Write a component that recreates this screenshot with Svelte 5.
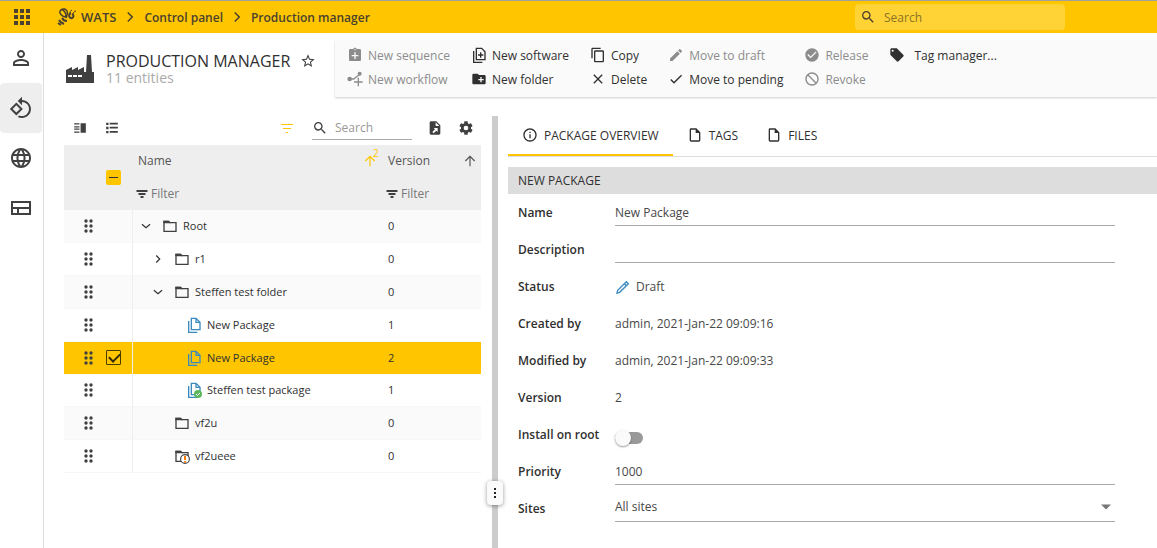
<script lang="ts">
  const FILLED: Record<string, string> = {
    apps: "M4 4h4v4H4zM10 4h4v4h-4zM16 4h4v4h-4zM4 10h4v4H4zM10 10h4v4h-4zM16 10h4v4h-4zM4 16h4v4H4zM10 16h4v4h-4zM16 16h4v4h-4z",
    search:
      "M15.5 14h-.79l-.28-.27A6.47 6.47 0 0 0 16 9.5 6.5 6.5 0 1 0 9.5 16c1.61 0 3.09-.59 4.23-1.57l.27.28v.79l5 4.99L20.49 19l-4.99-5zm-6 0C7.01 14 5 11.99 5 9.5S7.01 5 9.5 5 14 7.01 14 9.5 11.99 14 9.5 14z",
    person:
      "M12 5.9a2.1 2.1 0 1 1 0 4.2 2.1 2.1 0 0 1 0-4.2m0 9c2.97 0 6.1 1.46 6.1 2.1v1.1H5.9V17c0-.64 3.13-2.1 6.1-2.1M12 4C9.79 4 8 5.79 8 8s1.79 4 4 4 4-1.79 4-4-1.79-4-4-4zm0 9c-2.67 0-8 1.34-8 4v3h16v-3c0-2.66-5.33-4-8-4z",
    rotate:
      "M7.34 6.41L.86 12.9l6.49 6.48 6.49-6.48-6.5-6.49zM3.69 12.9l3.66-3.66L11 12.9l-3.66 3.66-3.65-3.66zm15.67-6.26C17.61 4.88 15.3 4 13 4V.76L8.76 5 13 9.24V6c1.79 0 3.58.68 4.95 2.05 2.73 2.73 2.73 7.17 0 9.9C16.58 19.32 14.79 20 13 20c-.97 0-1.94-.21-2.84-.61l-1.49 1.49C10.02 21.62 11.51 22 13 22c2.3 0 4.61-.88 6.36-2.64 3.52-3.51 3.52-9.21 0-12.72z",
    globe:
      "M11.99 2C6.47 2 2 6.48 2 12s4.47 10 9.99 10C17.52 22 22 17.52 22 12S17.52 2 11.99 2zm6.93 6h-2.95c-.32-1.25-.78-2.45-1.38-3.56 1.84.63 3.37 1.91 4.33 3.56zM12 4.04c.83 1.2 1.48 2.53 1.91 3.96h-3.82c.43-1.43 1.08-2.76 1.91-3.96zM4.26 14C4.1 13.36 4 12.69 4 12s.1-1.36.26-2h3.38c-.08.66-.14 1.32-.14 2 0 .68.06 1.34.14 2H4.26zm.82 2h2.95c.32 1.25.78 2.45 1.38 3.56-1.84-.63-3.37-1.9-4.33-3.56zm2.95-8H5.08c.96-1.66 2.49-2.93 4.33-3.56C8.81 5.55 8.35 6.75 8.03 8zM12 19.96c-.83-1.2-1.48-2.53-1.91-3.96h3.82c-.43 1.43-1.08 2.76-1.91 3.96zM14.34 14H9.66c-.09-.66-.16-1.32-.16-2 0-.68.07-1.35.16-2h4.68c.09.65.16 1.32.16 2 0 .68-.07 1.34-.16 2zm.25 5.56c.6-1.11 1.06-2.31 1.38-3.56h2.95c-.96 1.65-2.49 2.93-4.33 3.56zM16.36 14c.08-.66.14-1.32.14-2 0-.68-.06-1.34-.14-2h3.38c.16.64.26 1.31.26 2s-.1 1.36-.26 2h-3.38z",
    star: "M22 9.24l-7.19-.62L12 2 9.19 8.63 2 9.24l5.46 4.73L5.82 21 12 17.27 18.18 21l-1.63-7.03L22 9.24zM12 15.4l-3.76 2.27 1-4.28-3.32-2.88 4.38-.38L12 6.1l1.71 4.04 4.38.38-3.32 2.88 1 4.28L12 15.4z",
    sequence:
      "M19 3h-4.18C14.4 1.84 13.3 1 12 1s-2.4.84-2.82 2H5a2 2 0 0 0-2 2v14c0 1.1.9 2 2 2h14a2 2 0 0 0 2-2V5a2 2 0 0 0-2-2zm-6 9h4v2h-4v4h-2v-4H7v-2h4V8h2zM12 3a1 1 0 1 1 0 2 1 1 0 0 1 0-2z",
    folderPlus:
      "M20 6h-8l-2-2H4a2 2 0 0 0-2 2v12c0 1.1.9 2 2 2h16a2 2 0 0 0 2-2V8a2 2 0 0 0-2-2zm-1 8h-3v3h-2v-3h-3v-2h3V9h2v3h3v2z",
    copy: "M16 1H4c-1.1 0-2 .9-2 2v14h2V3h12V1zm3 4H8c-1.1 0-2 .9-2 2v14c0 1.1.9 2 2 2h11c1.1 0 2-.9 2-2V7c0-1.1-.9-2-2-2zm0 16H8V7h11v14z",
    close:
      "M19 6.41L17.59 5 12 10.59 6.41 5 5 6.41 10.59 12 5 17.59 6.41 19 12 13.41 17.59 19 19 17.59 13.41 12z",
    pencil:
      "M3 17.25V21h3.75L17.81 9.94l-3.75-3.75L3 17.25zM20.71 7.04a1 1 0 0 0 0-1.41l-2.34-2.34a1 1 0 0 0-1.41 0l-1.83 1.83 3.75 3.75 1.83-1.83z",
    check: "M9 16.17L4.83 12l-1.42 1.41L9 19 21 7l-1.41-1.41z",
    release:
      "M12 2C6.48 2 2 6.48 2 12s4.48 10 10 10 10-4.48 10-10S17.52 2 12 2zm-2 15l-5-5 1.41-1.41L10 14.17l7.59-7.59L19 8l-9 9z",
    revoke:
      "M12 2C6.48 2 2 6.48 2 12s4.48 10 10 10 10-4.48 10-10S17.52 2 12 2zm0 18a8 8 0 0 1-8-8c0-1.85.63-3.55 1.69-4.9L16.9 18.31A7.9 7.9 0 0 1 12 20zm6.31-3.1L7.1 5.69A7.9 7.9 0 0 1 12 4a8 8 0 0 1 8 8c0 1.85-.63 3.55-1.69 4.9z",
    tag: "M21.41 11.58l-9-9C12.05 2.22 11.55 2 11 2H4c-1.1 0-2 .9-2 2v7c0 .55.22 1.05.59 1.42l9 9c.36.36.86.58 1.41.58s1.05-.22 1.41-.59l7-7c.37-.36.59-.86.59-1.41s-.23-1.06-.59-1.42zM5.5 7a1.5 1.5 0 1 1 0-3 1.5 1.5 0 0 1 0 3z",
    gear: "M19.43 12.98c.04-.32.07-.64.07-.98s-.03-.66-.07-.98l2.11-1.65c.19-.15.24-.42.12-.64l-2-3.46c-.12-.22-.39-.3-.61-.22l-2.49 1c-.52-.4-1.08-.73-1.69-.98l-.38-2.65C14.46 2.18 14.25 2 14 2h-4c-.25 0-.46.18-.49.42l-.38 2.65c-.61.25-1.17.59-1.69.98l-2.49-1c-.23-.09-.49 0-.61.22l-2 3.46c-.13.22-.07.49.12.64l2.11 1.65c-.04.32-.07.65-.07.98s.03.66.07.98l-2.11 1.65c-.19.15-.24.42-.12.64l2 3.46c.12.22.39.3.61.22l2.49-1c.52.4 1.08.73 1.69.98l.38 2.65c.03.24.24.42.49.42h4c.25 0 .46-.18.49-.42l.38-2.65c.61-.25 1.17-.59 1.69-.98l2.49 1c.23.09.49 0 .61-.22l2-3.46c.12-.22.07-.49-.12-.64l-2.11-1.65zM12 15.5a3.5 3.5 0 1 1 0-7 3.5 3.5 0 0 1 0 7z",
    info: "M11 17h2v-6h-2v6zm0-8h2V7h-2v2zm1-7C6.48 2 2 6.48 2 12s4.48 10 10 10 10-4.48 10-10S17.52 2 12 2zm0 18c-4.41 0-8-3.59-8-8s3.59-8 8-8 8 3.59 8 8-3.59 8-8 8z",
    columns: "M2 4h9v2H2zM2 9h9v2H2zM2 13h9v2H2zM2 18h9v2H2zM13 4h9v16h-9z",
    list: "M2 3h4v4H2zM2 10h4v4H2zM2 17h4v4H2zM8 3h14v3H8zM8 10h14v3H8zM8 17h14v3H8z",
    filter: "M1 4h22v4H1zM5 10h14v4H5zM9 16h6v4H9z",
    exportFile:
      "M14 2H6a2 2 0 0 0-2 2v16c0 1.1.9 2 2 2h12a2 2 0 0 0 2-2V8zM13 3.5V9h5.5zM16 18l-2-2-4 4-2-2 4-4-2-2h6z",
    page: "M14 2H6a2 2 0 0 0-2 2v16c0 1.1.9 2 2 2h12a2 2 0 0 0 2-2V8zM6 4h7v5h5v11H6z",
    caret: "M2 7h20l-10 10z",
  };

  const STROKED: Record<string, string> = {
    layout: "M3 6h18v12H3zM3 12h18M9 12v6",
    right: "M9 6l6 6-6 6",
    down: "M5 9l7 6 7-6",
    up: "M12 21V4M4 12l8-8 8 8",
    software: "M8 2h8l5 5v12H8zM4 6v17h13M14.5 8v8M10.5 12h8",
    folder: "M3 5h7l2 2h9v13H3z",
    package: "M8 2h7l6 6v11H8zM15 2v6h6M4 6v17h13",
    edit: "M3 21l1-4L17 4l3 3L7 20zM14 7l3 3",
  };

  const sideLinks = [
    { icon: "person", label: "Account" },
    { icon: "rotate", label: "Production", active: true },
    { icon: "globe", label: "Sites" },
    { icon: "layout", label: "Dashboard" },
  ];

  const actions = [
    [
      { icon: "sequence", label: "New sequence", off: true },
      { icon: "workflow", label: "New workflow", off: true },
    ],
    [
      { icon: "software", label: "New software" },
      { icon: "folderPlus", label: "New folder" },
    ],
    [
      { icon: "copy", label: "Copy" },
      { icon: "close", label: "Delete" },
    ],
    [
      { icon: "pencil", label: "Move to draft", off: true },
      { icon: "check", label: "Move to pending" },
    ],
    [
      { icon: "release", label: "Release", off: true },
      { icon: "revoke", label: "Revoke", off: true },
    ],
    [{ icon: "tag", label: "Tag manager..." }],
  ];

  const rows = [
    { name: "Root", version: 0, level: 0, icon: "folder", toggle: "down" },
    { name: "r1", version: 0, level: 1, icon: "folder", toggle: "right" },
    { name: "Steffen test folder", version: 0, level: 1, icon: "folder", toggle: "down" },
    { name: "New Package", version: 1, level: 2, icon: "package" },
    { name: "New Package", version: 2, level: 2, icon: "package" },
    { name: "Steffen test package", version: 1, level: 2, icon: "package", badge: "ok" },
    { name: "vf2u", version: 0, level: 1, icon: "folder" },
    { name: "vf2ueee", version: 0, level: 1, icon: "folder", badge: "warn" },
  ];

  const tabs = [
    { icon: "info", label: "PACKAGE OVERVIEW" },
    { icon: "page", label: "TAGS" },
    { icon: "page", label: "FILES" },
  ];

  let selected = $state(4);
  let activeTab = $state(0);
  let name = $state("New Package");
  let description = $state("");
  let installOnRoot = $state(false);
  let priority = $state("1000");
</script>

{#snippet icon(id: string, size = 16)}
  <svg width={size} height={size} viewBox="0 0 24 24" aria-hidden="true">
    {#if id === "workflow"}
      <path d="M4 12l6 0 8-6M17 10v13M10.5 16.5h13" fill="none" stroke="currentColor" stroke-width="2" />
      <circle cx="4" cy="12" r="3.5" fill="currentColor" />
      <circle cx="19" cy="4" r="3" fill="currentColor" />
    {:else if FILLED[id]}
      <path d={FILLED[id]} fill="currentColor" fill-rule="evenodd" />
    {:else}
      <path d={STROKED[id]} fill="none" stroke="currentColor" stroke-width="2" />
      {#if id === "folder"}
        <path d="M2 4h8l3 4H2z" fill="currentColor" />
      {/if}
    {/if}
  </svg>
{/snippet}

<div class="app">
  <header class="topbar">
    <button class="apps" aria-label="Apps">{@render icon("apps", 24)}</button>
    <nav class="crumbs" aria-label="Breadcrumb">
      <a class="brand" href="#home">
        <svg width="20" height="18" viewBox="0 0 20 18" fill="none" stroke="currentColor" aria-hidden="true">
          <path d="M9 9C5 9 2 5 3 3c2-3 6 0 6 6z" stroke-width="1.5" />
          <path d="M4 2c2-2 5-1 6 1 1 3 0 5-1 7" stroke-width="1.5" />
          <path d="M5 10c1 2 2 3 5 3M2 12c1 2 3 3 5 4M1 15l3 2" stroke-width="2" />
          <path d="M14 5c-3 1-2 6 1 5 2-1 2-3 0-4" stroke-width="2" />
          <path d="M13 6c0-2 0-3 2-4M16 6c1-2 1-3 3-3" stroke-width="1" />
        </svg>
        WATS
      </a>
      {@render icon("right", 18)}
      <a href="#control">Control panel</a>
      {@render icon("right", 18)}
      <a href="#production">Production manager</a>
    </nav>
    <label class="top-search">
      {@render icon("search", 16)}
      <input type="search" placeholder="Search" aria-label="Search" />
    </label>
  </header>

  <div class="body">
    <nav class="sidebar" aria-label="Main">
      {#each sideLinks as link}
        <a href="#{link.label}" class:active={link.active} aria-label={link.label}>
          {@render icon(link.icon, 24)}
        </a>
      {/each}
    </nav>

    <main>
      <div class="page-head">
        <div class="title">
          <svg width="28" height="28" viewBox="0 0 28 28" aria-hidden="true">
            <path
              d="M0 28V15l6-3v3l6-3v3l6-3v5h2L21 0h4l1 17h2v11zM2 20v2h4v-2zM7 20v2h4v-2zM12 20v2h4v-2z"
              fill="currentColor"
              fill-rule="evenodd"
            />
          </svg>
          <div class="title-text">
            <h1>PRODUCTION MANAGER</h1>
            <p>11 entities</p>
          </div>
          <button class="star" aria-label="Favourite">{@render icon("star", 16)}</button>
        </div>
        <div class="actions">
          {#each actions as group}
            <div class="group">
              {#each group as action}
                <button disabled={action.off}>
                  {@render icon(action.icon, 16)}
                  {action.label}
                </button>
              {/each}
            </div>
          {/each}
        </div>
      </div>

      <div class="panes">
        <section class="list-pane">
          <div class="list-tools">
            <div class="view-tools">
              <button aria-label="Columns">{@render icon("columns", 14)}</button>
              <button aria-label="List view">{@render icon("list", 14)}</button>
            </div>
            <button class="filter-on" aria-label="Toggle filter">
              <svg width="12" height="9" viewBox="0 0 12 9" aria-hidden="true">
                <path d="M0 0h12v1H0zM2 4h8v1H2zM5 8h2v1H5z" fill="currentColor" />
              </svg>
            </button>
            <label class="list-search">
              {@render icon("search", 16)}
              <input type="search" placeholder="Search" aria-label="Search list" />
            </label>
            <button aria-label="Export">{@render icon("exportFile", 16)}</button>
            <button aria-label="Settings">{@render icon("gear", 16)}</button>
          </div>

          <table>
            <colgroup>
              <col class="col-drag" />
              <col class="col-check" />
              <col />
              <col class="col-version" />
            </colgroup>
            <thead>
              <tr>
                <th rowspan="2"></th>
                <th rowspan="2">
                  <button class="select-some" aria-label="Clear selection"></button>
                </th>
                <th>
                  <div class="th">
                    Name
                    <span class="sort sorted">{@render icon("up", 14)}<sup>2</sup></span>
                  </div>
                </th>
                <th>
                  <div class="th">
                    Version
                    <span class="sort">{@render icon("up", 14)}</span>
                  </div>
                </th>
              </tr>
              <tr>
                {#each ["name", "version"] as column}
                  <th>
                    <label class="filter">
                      {@render icon("filter", 12)}
                      <input placeholder="Filter" aria-label="Filter by {column}" />
                    </label>
                  </th>
                {/each}
              </tr>
            </thead>
            <tbody>
              {#each rows as row, i}
                <tr class:selected={selected === i} onclick={() => (selected = i)}>
                  <td class="drag">
                    <svg width="10" height="14" viewBox="0 0 10 14" aria-hidden="true">
                      {#each [2, 7, 12] as y}
                        <circle cx="2" cy={y} r="1.7" fill="currentColor" />
                        <circle cx="7" cy={y} r="1.7" fill="currentColor" />
                      {/each}
                    </svg>
                  </td>
                  <td class="check">
                    {#if selected === i}
                      <input type="checkbox" checked aria-label="Select {row.name}" />
                    {/if}
                  </td>
                  <td class="name">
                    <div class="node level-{row.level}">
                      <span class="toggle">
                        {#if row.toggle}{@render icon(row.toggle, 14)}{/if}
                      </span>
                      <span class="kind {row.icon}">
                        {@render icon(row.icon, 16)}
                        {#if row.badge === "ok"}
                          <svg class="badge" width="8" height="8" viewBox="0 0 8 8" aria-hidden="true">
                            <circle cx="4" cy="4" r="4" fill="#5cb85c" />
                            <path d="M2 4l1.5 1.5L6 3" fill="none" stroke="#fff" />
                          </svg>
                        {:else if row.badge === "warn"}
                          <svg class="badge" width="10" height="10" viewBox="0 0 10 10" aria-hidden="true">
                            <circle cx="5" cy="5" r="4.4" fill="#fff" stroke="#404040" stroke-width="1.1" />
                            <path d="M5 2v4M5 7v1.5" stroke="#f57c00" stroke-width="2" />
                          </svg>
                        {/if}
                      </span>
                      {row.name}
                    </div>
                  </td>
                  <td class="version">{row.version}</td>
                </tr>
              {/each}
            </tbody>
          </table>
        </section>

        <div class="splitter">
          <button aria-label="Resize panes">
            <span></span><span></span><span></span>
          </button>
        </div>

        <section class="detail">
          <div class="tabs" role="tablist">
            {#each tabs as tab, i}
              <button
                role="tab"
                aria-selected={activeTab === i}
                class:current={activeTab === i}
                onclick={() => (activeTab = i)}
              >
                {@render icon(tab.icon, 16)}
                {tab.label}
              </button>
            {/each}
          </div>

          <h2>NEW PACKAGE</h2>

          <div class="form">
            <label for="name">Name</label>
            <input id="name" bind:value={name} />
            <label for="description">Description</label>
            <input id="description" bind:value={description} />
            <span class="label">Status</span>
            <span class="value status">{@render icon("edit", 16)}Draft</span>
            <span class="label">Created by</span>
            <span class="value">admin, 2021-Jan-22 09:09:16</span>
            <span class="label">Modified by</span>
            <span class="value">admin, 2021-Jan-22 09:09:33</span>
            <span class="label">Version</span>
            <span class="value">2</span>
            <label for="install">Install on root</label>
            <input id="install" class="switch" type="checkbox" bind:checked={installOnRoot} />
            <label for="priority">Priority</label>
            <input id="priority" bind:value={priority} />
            <label for="sites">Sites</label>
            <div class="select">
              <select id="sites">
                <option>All sites</option>
              </select>
              {@render icon("caret", 12)}
            </div>
          </div>
        </section>
      </div>
    </main>
  </div>
</div>

<style>
  :global(body) {
    font-family: "Open Sans", "Noto Sans", sans-serif;
    font-size: 12px;
    color: #303030;
    background: #fff;
  }

  .app,
  .app * {
    box-sizing: border-box;
  }

  .app {
    display: flex;
    flex-direction: column;
    min-height: 100vh;
  }

  svg {
    display: block;
    flex: none;
  }

  button,
  input,
  select {
    font: inherit;
    color: inherit;
    background: none;
    border: none;
    padding: 0;
    margin: 0;
    outline: none;
    appearance: none;
  }

  button {
    display: flex;
    align-items: center;
    cursor: pointer;
  }

  a {
    color: inherit;
    text-decoration: none;
  }

  input::placeholder {
    color: #999;
    opacity: 1;
  }

  .topbar {
    display: flex;
    align-items: center;
    height: 33px;
    border-top: 1px solid #a0a0a0;
    background: #ffc600;
    color: #4a4130;
  }

  .apps {
    width: 44px;
    justify-content: center;
  }

  .crumbs {
    display: flex;
    align-items: center;
    gap: 5px;
    flex: 1;
    padding-left: 13px;
    font-size: 12px;
    font-weight: 600;
  }

  .brand {
    display: flex;
    align-items: center;
    gap: 4px;
    font-size: 13px;
  }

  .top-search {
    display: flex;
    align-items: center;
    gap: 8px;
    width: 210px;
    height: 26px;
    margin-right: 92px;
    padding: 0 5px;
    border-radius: 4px;
    background: #ffd236;
  }

  .top-search input {
    width: 100%;
  }

  .top-search input::placeholder {
    color: #8a7224;
  }

  .body {
    display: flex;
    flex: 1;
  }

  .sidebar {
    width: 44px;
    padding-right: 1px;
    border-right: 1px solid #ddd;
    color: #404040;
  }

  .sidebar a {
    display: flex;
    align-items: center;
    justify-content: center;
    height: 50px;
    border-radius: 4px;
  }

  .sidebar a.active {
    background: #eee;
  }

  main {
    display: flex;
    flex-direction: column;
    flex: 1;
    min-width: 0;
  }

  .page-head {
    display: flex;
    padding-top: 7px;
  }

  .title {
    display: flex;
    align-items: flex-start;
    width: 291px;
    padding: 15px 0 0 22px;
    color: #404040;
  }

  .title-text {
    margin: -4px 10px 0 12px;
  }

  h1 {
    margin: 0;
    font-size: 16px;
    font-weight: 400;
    line-height: 20px;
    color: #303030;
    white-space: nowrap;
  }

  .title p {
    margin: 0;
    font-size: 14px;
    line-height: 14px;
    color: #aaa;
  }

  .star {
    margin-top: -2px;
  }

  .actions {
    display: flex;
    flex: 1;
    gap: 21px;
    padding: 3px 12px 6px;
    background: #fafafa;
    box-shadow: 0 1px 2px rgba(0, 0, 0, 0.2);
  }

  .group button {
    height: 24px;
    gap: 5px;
    white-space: nowrap;
  }

  .group button:disabled {
    color: #8c8c8c;
    cursor: default;
  }

  .group:last-child button {
    gap: 9px;
  }

  .panes {
    display: flex;
    flex: 1;
    padding-top: 19px;
  }

  .list-pane {
    width: 417px;
    margin: 0 11px 0 20px;
  }

  .list-tools {
    display: flex;
    align-items: center;
    gap: 15px;
    height: 29px;
    padding: 0 7px 5px 9px;
    color: #404040;
  }

  .view-tools {
    display: flex;
    gap: 18px;
  }

  .filter-on {
    margin-left: auto;
    margin-right: 4px;
    color: #ffc600;
  }

  .list-search {
    display: flex;
    align-items: center;
    gap: 7px;
    width: 100px;
    height: 24px;
    border-bottom: 1px solid #aaa;
  }

  .list-search input {
    width: 100%;
  }

  table {
    width: 100%;
    table-layout: fixed;
    border-collapse: separate;
    border-spacing: 0;
  }

  .col-drag {
    width: 38px;
  }

  .col-check {
    width: 30px;
  }

  .col-version {
    width: 103px;
  }

  thead {
    background: #eee;
    color: #555;
  }

  th {
    height: 33px;
    padding: 0 4px 0 6px;
    font-weight: 400;
    text-align: left;
  }

  thead tr:first-child th {
    height: 32px;
    padding-bottom: 1px;
  }

  th:last-child {
    padding-left: 10px;
  }

  .th {
    display: flex;
    align-items: center;
    justify-content: space-between;
  }

  .sort {
    display: flex;
    position: relative;
  }

  .sorted {
    margin-right: -3px;
    color: #ffc600;
  }

  .sorted sup {
    position: absolute;
    top: -6px;
    left: 10px;
    font-size: 10px;
    line-height: 10px;
  }

  .select-some {
    justify-content: center;
    width: 15px;
    height: 15px;
    margin-left: -2px;
    border-radius: 2px;
    background: #ffc600;
  }

  .select-some::before {
    content: "";
    width: 9px;
    height: 1px;
    background: #333;
  }

  .filter {
    display: flex;
    align-items: center;
    gap: 3px;
    margin-left: -2px;
    color: #404040;
  }

  .filter input {
    width: 100%;
  }

  .filter input::placeholder {
    color: #777;
  }

  td {
    height: 33px;
    padding: 0 0 1px;
    border-bottom: 1px solid #f7f7f7;
    font-size: 11px;
  }

  tbody tr:nth-child(4n + 1),
  tbody tr:nth-child(4n + 3) {
    background: #fafafa;
  }

  tbody tr.selected {
    background: #ffc600;
  }

  tr.selected td {
    height: 32px;
    border-bottom: none;
  }

  td.drag {
    padding-left: 20px;
    color: #404040;
  }

  td.check {
    padding-left: 4px;
  }

  td.check input {
    display: block;
    width: 15px;
    height: 15px;
    border: 1px solid #4a3c00;
    border-radius: 1px;
  }

  td.check input::before {
    content: "";
    display: block;
    width: 9px;
    height: 5px;
    margin: 2px 0 0 2px;
    border: solid #332a00;
    border-width: 0 0 2px 2px;
    transform: rotate(-45deg);
  }

  td.name {
    border-left: 1px solid #eee;
  }

  .node {
    display: flex;
    align-items: center;
    padding-left: 6px;
  }

  .level-1 {
    padding-left: 18px;
  }

  .level-2 {
    padding-left: 30px;
  }

  .toggle {
    width: 23px;
  }

  .kind {
    position: relative;
    margin-right: 5px;
    color: #404040;
  }

  .package {
    color: #3a8ac0;
  }

  .badge {
    position: absolute;
    right: 0;
    bottom: 0;
  }

  td.version {
    padding-left: 10px;
  }

  .splitter {
    position: relative;
    width: 6px;
    background: #ccc;
  }

  .splitter button {
    position: absolute;
    bottom: 43px;
    left: -5px;
    flex-direction: column;
    justify-content: center;
    gap: 2px;
    width: 16px;
    height: 24px;
    border-radius: 4px;
    background: #fafafa;
    box-shadow: 0 1px 4px rgba(0, 0, 0, 0.4);
  }

  .splitter span {
    width: 2px;
    height: 2px;
    background: #222;
  }

  .detail {
    flex: 1;
    min-width: 0;
    padding-left: 10px;
  }

  .tabs {
    display: flex;
    height: 41px;
    border-bottom: 1px solid #ddd;
  }

  .tabs button {
    gap: 6px;
    padding: 0 14px;
    border-bottom: 2px solid transparent;
    font-weight: 500;
  }

  .tabs .current {
    border-color: #ffc600;
  }

  h2 {
    margin: 10px 0 0;
    padding-left: 10px;
    background: #ddd;
    font-size: 12px;
    font-weight: 400;
    line-height: 27px;
  }

  .form {
    display: grid;
    grid-template-columns: 97px minmax(0, 500px);
    grid-auto-rows: 37px;
    align-items: center;
    padding-left: 10px;
  }

  .form label,
  .label {
    font-weight: 600;
  }

  .form input:not(.switch),
  .select {
    width: 100%;
    height: 26px;
    border-bottom: 1px solid #aaa;
  }

  .form input,
  .value,
  .select {
    color: #484848;
  }

  .status {
    display: flex;
    align-items: center;
    gap: 5px;
  }

  .status :global(svg) {
    color: #3a8ac0;
  }

  .switch {
    align-self: end;
    width: 28px;
    height: 12px;
    margin-bottom: 9px;
    border-radius: 6px;
    background: #999;
  }

  .switch::before {
    content: "";
    display: block;
    width: 16px;
    height: 16px;
    margin-top: -2px;
    border-radius: 50%;
    background: #fafafa;
    box-shadow: 0 1px 2px rgba(0, 0, 0, 0.4);
  }

  .switch:checked::before {
    margin-left: 12px;
  }

  .select {
    display: flex;
    align-items: center;
    padding: 0 3px 3px 0;
  }

  .select :global(svg) {
    color: #777;
  }

  .select select {
    flex: 1;
  }
</style>
